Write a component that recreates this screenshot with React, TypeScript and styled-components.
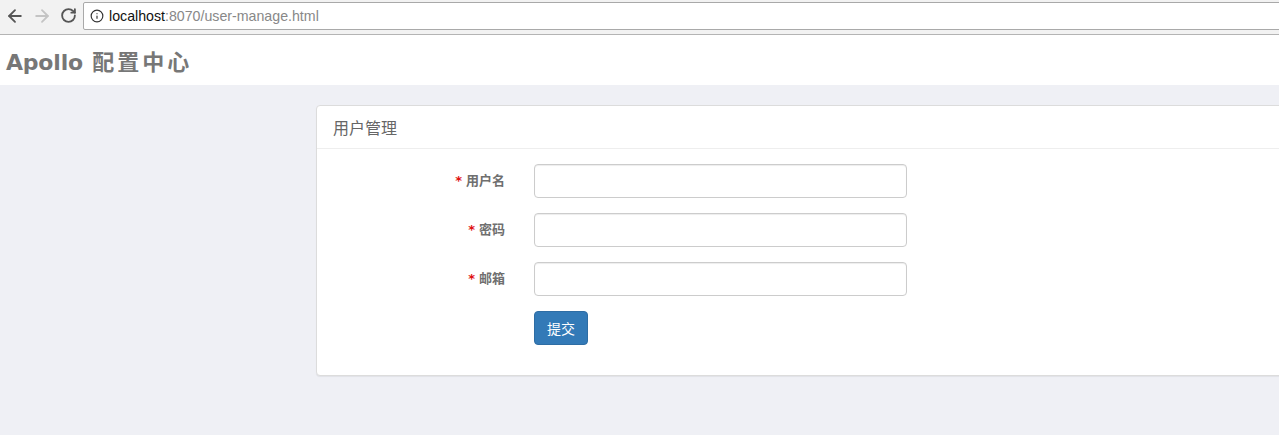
import { Fragment } from "react";
import styled, { createGlobalStyle } from "styled-components";
import { ArrowLeft, ArrowRight, RotateCw, Info } from "lucide-react";

const GlobalStyle = createGlobalStyle`
  html, body {
    margin: 0;
    padding: 0;
    background: #eff0f5;
    overflow: hidden;
  }
  * {
    box-sizing: border-box;
  }
`;

const Page = styled.div`
  width: 1279px;
  height: 435px;
  overflow: hidden;
  display: flex;
  flex-direction: column;
  font-family: "DejaVu Sans", "Noto Sans CJK SC", sans-serif;
`;

const BrowserBar = styled.div`
  height: 35px;
  flex-shrink: 0;
  background: #f2f2f2;
  border-bottom: 1px solid #b4b4b4;
  display: flex;
  align-items: center;
  padding-left: 1px;
  padding-bottom: 3px;
`;

const NavButton = styled.div<{ $disabled?: boolean }>`
  width: 27px;
  height: 28px;
  display: flex;
  align-items: center;
  justify-content: center;
  color: ${(p) => (p.$disabled ? "#c4c4c4" : "#555")};
`;

const AddressBox = styled.div`
  flex: 1;
  margin-left: 1px;
  margin-right: -10px;
  height: 28px;
  background: #fff;
  border: 1px solid #a9a9a9;
  border-radius: 2px;
  display: flex;
  align-items: center;
  padding-left: 6px;
  gap: 5px;
  font-family: "Liberation Sans", Arial, sans-serif;
  font-size: 14.2px;
  color: #888;
`;

const Host = styled.span`
  color: #111;
`;

const Header = styled.header`
  height: 50px;
  flex-shrink: 0;
  background: #fff;
  display: flex;
  align-items: center;
  padding-left: 6px;
`;

const Brand = styled.h1`
  margin: 0;
  font-size: 22px;
  font-weight: 700;
  color: #777;
  font-family: "DejaVu Sans", "Noto Sans CJK SC", sans-serif;
  letter-spacing: -0.2px;
`;

const BrandCjk = styled.span`
  margin-left: 2px;
  letter-spacing: 3px;
`;

const Main = styled.main`
  flex: 1;
  padding: 20px 0 0 316px;
`;

const Panel = styled.section`
  width: 1000px;
  height: 271px;
  background: #fff;
  border: 1px solid #dcdcdc;
  border-radius: 4px;
  box-shadow: 0 1px 1px rgba(0, 0, 0, 0.06);
`;

const PanelHeading = styled.div`
  height: 43px;
  padding: 0 16px;
  display: flex;
  align-items: center;
  border-bottom: 1px solid #eee;
  font-size: 16px;
  color: #666;
  font-family: "Noto Sans CJK SC", sans-serif;
`;

const Form = styled.form`
  display: grid;
  grid-template-columns: 188px 373px;
  column-gap: 29px;
  row-gap: 15px;
  padding-top: 15px;
  align-items: center;
`;

const Label = styled.label`
  text-align: right;
  font-size: 13px;
  font-weight: 700;
  color: #6f6f6f;
  font-family: "Noto Sans CJK SC", sans-serif;
  padding-bottom: 4px;
`;

const Star = styled.span`
  color: #e01010;
  margin-right: 4px;
  font-family: "DejaVu Sans", sans-serif;
`;

const Input = styled.input`
  height: 34px;
  width: 100%;
  border: 1px solid #ccc;
  border-radius: 4px;
  padding: 6px 12px;
  box-shadow: inset 0 1px 1px rgba(0, 0, 0, 0.075);
  outline: none;
`;

const Submit = styled.button`
  grid-column: 2;
  justify-self: start;
  width: 54px;
  height: 34px;
  border: 1px solid #2e6da4;
  border-radius: 4px;
  background: #337ab7;
  color: #fff;
  font-size: 14px;
  font-family: "Noto Sans CJK SC", sans-serif;
  padding: 0;
`;

const fields = [
  { id: "username", label: "用户名" },
  { id: "password", label: "密码" },
  { id: "email", label: "邮箱" },
];

const App = () => {
  return (
    <Page>
      <GlobalStyle />
      <BrowserBar>
        <NavButton>
          <ArrowLeft size={20} strokeWidth={2.2} />
        </NavButton>
        <NavButton $disabled>
          <ArrowRight size={20} strokeWidth={2.2} />
        </NavButton>
        <NavButton>
          <RotateCw size={17} strokeWidth={2.6} />
        </NavButton>
        <AddressBox>
          <Info size={14} strokeWidth={2} color="#333" />
          <span>
            <Host>localhost</Host>:8070/user-manage.html
          </span>
        </AddressBox>
      </BrowserBar>
      <Header>
        <Brand>
          Apollo <BrandCjk>配置中心</BrandCjk>
        </Brand>
      </Header>
      <Main>
        <Panel>
          <PanelHeading>用户管理</PanelHeading>
          <Form onSubmit={(e) => e.preventDefault()}>
            {fields.map((f) => (
              <Fragment key={f.id}>
                <Label htmlFor={f.id}>
                  <Star>*</Star>
                  {f.label}
                </Label>
                <Input id={f.id} type="text" />
              </Fragment>
            ))}
            <Submit type="submit">提交</Submit>
          </Form>
        </Panel>
      </Main>
    </Page>
  );
};

export default App;
